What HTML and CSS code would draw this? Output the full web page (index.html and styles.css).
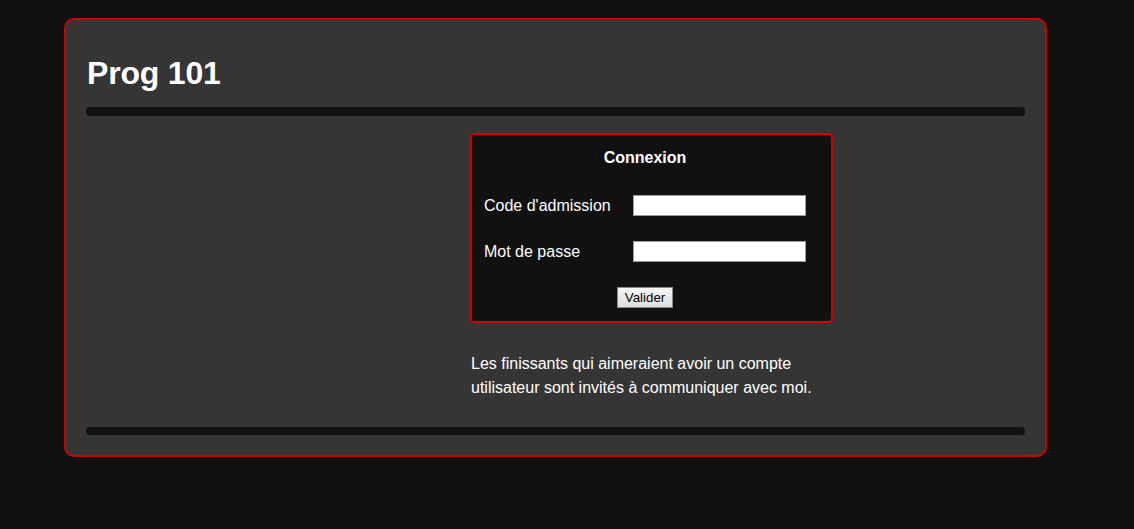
FILE: index.html
```html
<!DOCTYPE html>
<html lang="fr">
<head>
<meta charset="utf-8">
<title>Prog 101</title>
<link rel="stylesheet" href="styles.css">
</head>
<body>
<div class="page">
  <h1 class="title">Prog 101</h1>
  <div class="bar bar-top"></div>
  <main class="content">
    <form class="login">
      <div class="login-title">Connexion</div>
      <div class="login-grid">
        <label class="label" for="code">Code d'admission</label>
        <input class="field" id="code" type="text">
        <label class="label" for="pass">Mot de passe</label>
        <input class="field" id="pass" type="password">
      </div>
      <div class="actions"><button class="btn" type="button">Valider</button></div>
    </form>
    <p class="note">Les finissants qui aimeraient avoir un compte utilisateur sont invités à communiquer avec moi.</p>
  </main>
  <div class="bar bar-bottom"></div>
</div>
</body>
</html>
```

FILE: styles.css
```css
html, body {
  background: #111111;
}
body {
  margin: 8px;
  font-family: "Liberation Sans", Arial, sans-serif;
  color: #ffffff;
}
.page {
  box-sizing: border-box;
  width: 983px;
  height: 439px;
  margin: 10px 0 0 56px;
  background: #353535;
  border: 2px solid #cc0000;
  border-radius: 10px;
  padding: 0 20px 20px 20px;
  display: flex;
  flex-direction: column;
}
.title {
  margin: 35px 0 0 0;
  font-size: 32px;
  line-height: 37px;
  font-weight: bold;
  padding-left: 1px;
  letter-spacing: -0.2px;
}
.bar {
  background: #111111;
  border-radius: 4px;
}
.bar-top {
  height: 9px;
  margin-top: 15px;
}
.bar-bottom {
  height: 8px;
  margin-top: 27px;
}
.content {
  margin-left: 384px;
  margin-top: 17px;
  width: 363px;
}
.login {
  box-sizing: border-box;
  width: 363px;
  height: 190px;
  margin: 0;
  background: #111111;
  border: 2px solid #cc0000;
  border-radius: 4px;
  padding: 14px 25px 0 12px;
}
.login-title {
  text-align: center;
  font-weight: bold;
  font-size: 16px;
  line-height: 18px;
}
.login-grid {
  display: grid;
  grid-template-columns: 149px 173px;
  row-gap: 25px;
  align-items: center;
  margin-top: 28px;
}
.label {
  font-size: 16px;
  line-height: 21px;
}
.field {
  box-sizing: border-box;
  width: 173px;
  height: 21px;
  margin: 0;
  border: 1px solid #9a9a9a;
  background: #ffffff;
  padding: 0 2px;
}
.actions {
  display: flex;
  justify-content: center;
  margin-top: 25px;
}
.btn {
  box-sizing: border-box;
  height: 21px;
  margin: 0;
  padding: 0 7px;
  font-family: "Liberation Sans", Arial, sans-serif;
  font-size: 13.33px;
  color: #000000;
  background: linear-gradient(#f6f6f6, #dedede);
  border: 1px solid #8a8a8a;
  border-radius: 0;
}
.note {
  margin: 29px 0 0 0;
  padding-left: 1px;
  font-size: 16px;
  line-height: 24px;
}
```
